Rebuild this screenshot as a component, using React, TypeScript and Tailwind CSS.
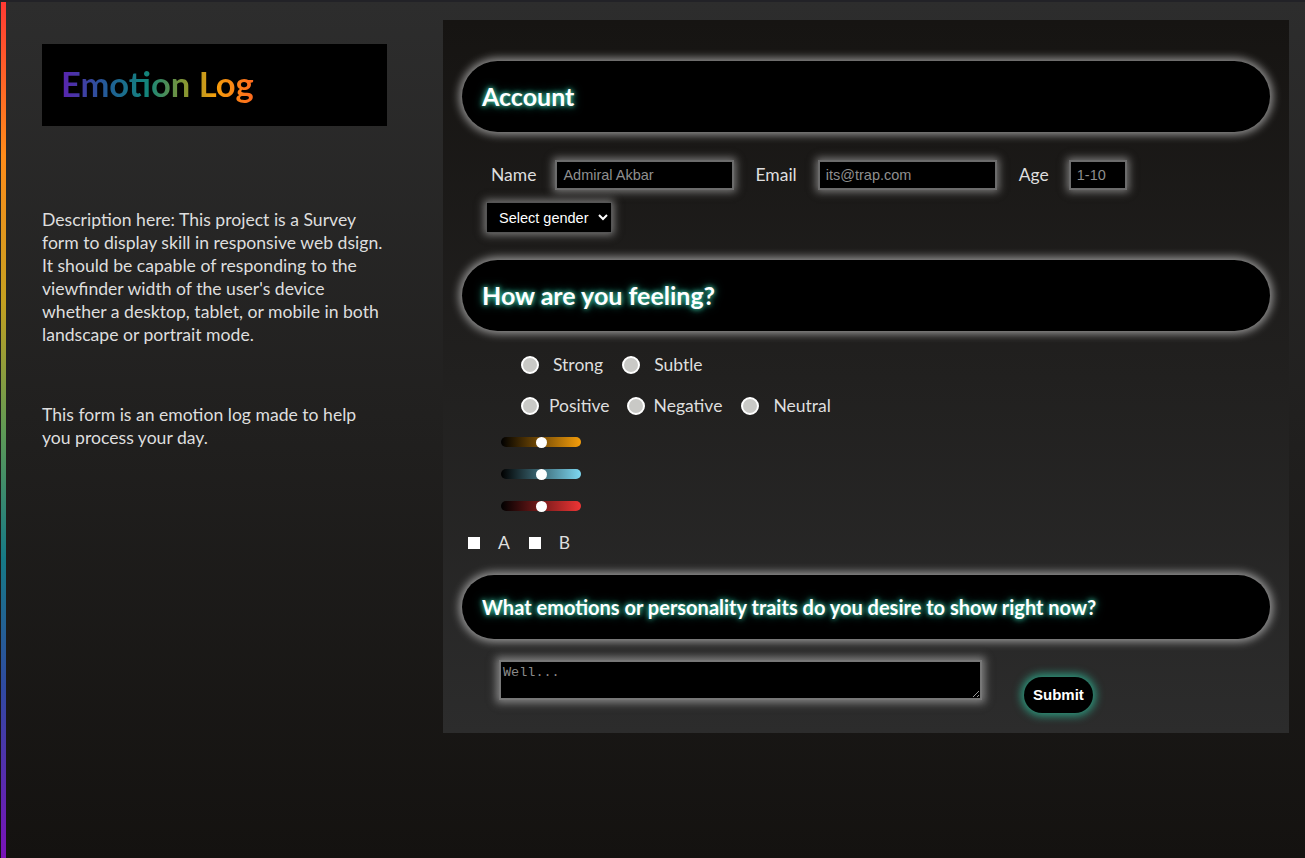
const glowBox = 'shadow-[0_0_9px_3px_rgba(210,210,210,0.65)]';
const glowText = '[text-shadow:0_0_5px_#47e0bd,0_0_10px_#1f9c80]';

function SectionHeader({ title, small }: { title: string; small?: boolean }) {
  return (
    <div
      className={`flex items-center rounded-full bg-black px-[20px] ${glowBox} ${
        small ? 'h-[64px]' : 'h-[71px]'
      }`}
    >
      <h2
        className={`font-bold text-white ${glowText} ${small ? 'text-[20px]' : 'text-[25px]'}`}
      >
        {title}
      </h2>
    </div>
  );
}

const fieldClass =
  'h-[30px] border-2 border-[#6b6b6b] bg-black px-[6px] font-["Liberation_Sans",Arial,sans-serif] text-[14.5px] text-white placeholder:text-[#8f8f8f] outline-none shadow-[0_0_8px_2px_rgba(200,200,200,0.55)]';

const radioClass =
  'h-[18px] w-[18px] shrink-0 appearance-none rounded-full border-2 border-white bg-[#c9c9c6]';

const sliders = [
  'bg-[linear-gradient(to_right,#000,#f59e0b)]',
  'bg-[linear-gradient(to_right,#000,#7dd8f2)]',
  'bg-[linear-gradient(to_right,#000,#ef3535)]',
];

const thumb =
  '[&::-webkit-slider-thumb]:h-[11px] [&::-webkit-slider-thumb]:w-[11px] [&::-webkit-slider-thumb]:appearance-none [&::-webkit-slider-thumb]:rounded-full [&::-webkit-slider-thumb]:bg-white';

export default function App() {
  return (
    <div className="flex min-h-[858px] border-t-2 border-[#222227] bg-[linear-gradient(to_bottom,#2d2d2d,#141210)] font-['Lato','Noto_Sans',sans-serif] text-[#dedede]">
      <div className="ml-px w-[5px] shrink-0 bg-[linear-gradient(to_bottom,#ff3a33,#ff8c1a_18%,#c4a020_35%,#5f9a55_50%,#167a86_65%,#2f4aa0_80%,#7a12b8)]" />

      <aside className="w-[345px] shrink-0 pl-[36px] pt-[42px] box-content">
        <div className="flex h-[82px] items-center bg-black pl-[19px]">
          <h1 className="bg-[linear-gradient(to_right,#5b22b0,#1f5f96_25%,#13857a_45%,#8a9630_65%,#f59e0b_80%,#ff6a1f)] bg-clip-text pb-[2px] text-[34.5px] font-bold text-transparent">
            Emotion Log
          </h1>
        </div>
        <p className="mt-[82px] w-[360px] whitespace-nowrap text-[17.6px] leading-[23px]">
          Description here: This project is a Survey
          <br />
          form to display skill in responsive web dsign.
          <br />
          It should be capable of responding to the
          <br />
          viewfinder width of the user's device
          <br />
          whether a desktop, tablet, or mobile in both
          <br />
          landscape or portrait mode.
        </p>
        <p className="mt-[57px] whitespace-nowrap text-[17.6px] leading-[23px]">
          This form is an emotion log made to help
          <br />
          you process your day.
        </p>
      </aside>

      <main className="ml-[56px] mt-[18px] h-[713px] w-[846px] bg-[linear-gradient(to_bottom,#161412,#2c2c2c)] px-[19px] pt-[41px]">
        <SectionHeader title="Account" />

        <div className="mt-[28px] flex items-center pl-[29px] text-[17.5px]">
          <label className="mr-[19px]">Name</label>
          <input className={`${fieldClass} w-[179px]`} placeholder="Admiral Akbar" />
          <label className="ml-[21px] mr-[21px]">Email</label>
          <input className={`${fieldClass} w-[179px]`} placeholder="its@trap.com" />
          <label className="ml-[22px] mr-[20px]">Age</label>
          <input className={`${fieldClass} w-[58px]`} placeholder="1-10" />
        </div>
        <div className="mt-[12px] pl-[24px]">
          <select className="h-[31px] w-[126px] border border-[#555] bg-black pl-[8px] font-['Liberation_Sans',Arial,sans-serif] text-[14.5px] text-white shadow-[0_0_8px_2px_rgba(200,200,200,0.55)]">
            <option>Select gender</option>
            <option>Female</option>
            <option>Male</option>
            <option>Other</option>
          </select>
        </div>

        <div className="mt-[27px]">
          <SectionHeader title="How are you feeling?" />
        </div>

        <div className="mt-[22px] flex h-[24px] items-center pl-[59px] text-[17.5px] leading-[24px]">
          <input type="radio" name="intensity" className={radioClass} />
          <span className="ml-[14px]">Strong</span>
          <input type="radio" name="intensity" className={`${radioClass} ml-[19px]`} />
          <span className="ml-[14px]">Subtle</span>
        </div>
        <div className="mt-[17px] flex h-[24px] items-center pl-[59px] text-[17.5px] leading-[24px]">
          <input type="radio" name="tone" className={radioClass} />
          <span className="ml-[10px]">Positive</span>
          <input type="radio" name="tone" className={`${radioClass} ml-[17px]`} />
          <span className="ml-[9px]">Negative</span>
          <input type="radio" name="tone" className={`${radioClass} ml-[19px]`} />
          <span className="ml-[14px]">Neutral</span>
        </div>

        <div className="mt-[19px] flex flex-col gap-[22px] pl-[39px]">
          {sliders.map((bg) => (
            <input
              key={bg}
              type="range"
              className={`block h-[10px] w-[80px] appearance-none rounded-full ${bg} ${thumb}`}
            />
          ))}
        </div>

        <div className="mt-[20px] flex h-[24px] items-center pl-[6px] text-[17.5px] leading-[24px]">
          <input type="checkbox" className="h-[12px] w-[12px] appearance-none bg-white" />
          <span className="ml-[18px]">A</span>
          <input type="checkbox" className="ml-[19px] h-[12px] w-[12px] appearance-none bg-white" />
          <span className="ml-[18px]">B</span>
        </div>

        <div className="mt-[20px]">
          <SectionHeader title="What emotions or personality traits do you desire to show right now?" small />
        </div>

        <div className="mt-[21px] flex items-start pl-[37px]">
          <textarea
            className="h-[40px] w-[483px] resize-y border-2 border-[#777] bg-black px-[2px] py-[1px] font-['Liberation_Mono',monospace] text-[13.5px] text-white placeholder:text-[#8a8a8a] outline-none shadow-[0_0_8px_3px_rgba(200,200,200,0.55)]"
            placeholder="Well..."
          />
          <button className="ml-[42px] mt-[17px] h-[36px] rounded-full bg-black px-[9px] font-['Liberation_Sans',Arial,sans-serif] text-[15px] font-bold text-white shadow-[0_0_8px_3px_rgba(46,170,140,0.85)]">
            Submit
          </button>
        </div>
      </main>
    </div>
  );
}
